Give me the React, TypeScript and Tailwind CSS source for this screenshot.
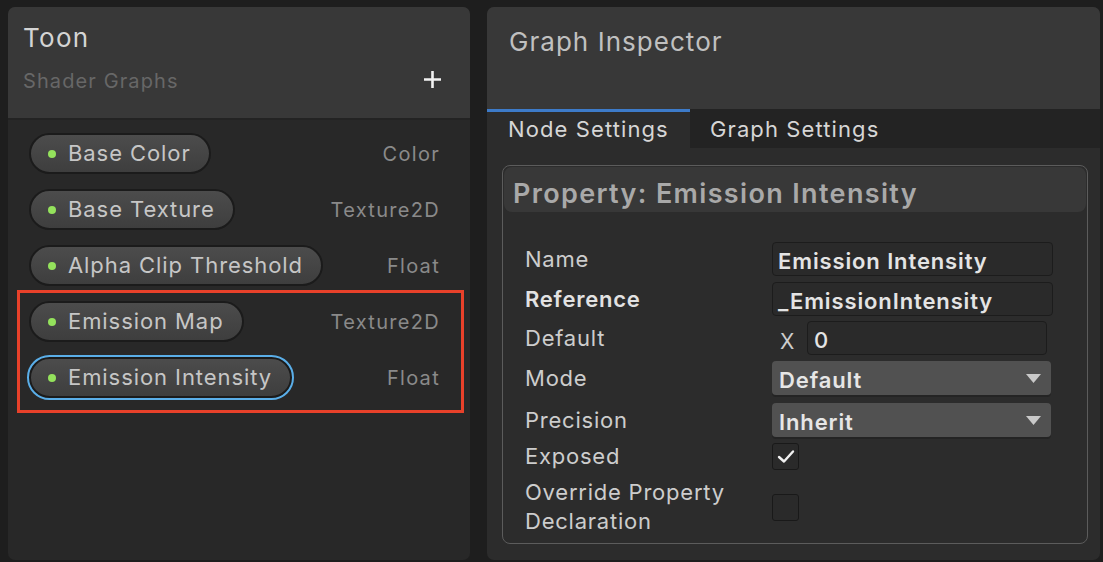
import React from "react";

const font = { fontFamily: "Inter, 'Noto Sans', sans-serif" } as React.CSSProperties;

function Pill({ name, type, selected }: { name: string; type: string; selected?: boolean }) {
  return (
    <div className="flex items-center justify-between h-[41px]">
      <div
        className={
          "flex items-center h-[41px] rounded-full border-2 border-[#1b1b1b] bg-gradient-to-b from-[#4c4c4c] to-[#3e3e3e] pl-[17px] pr-[18px] " +
          (selected ? "outline-2 outline-[#5aaee8]" : "")
        }
      >
        <span className="w-[8px] h-[8px] rounded-full bg-[#94e25c] mr-[12px]" />
        <span className="text-[22px] leading-none tracking-[0.042em] text-[#c6c6c6] pb-[1px]">{name}</span>
      </div>
      <span className="text-[20px] leading-none tracking-[0.065em] text-[#8a8a8a]">{type}</span>
    </div>
  );
}

function Label({ children, bold }: { children: React.ReactNode; bold?: boolean }) {
  return (
    <div
      className={
        "w-[247px] text-[22px] leading-[29px] tracking-[0.035em] " +
        (bold ? "font-semibold text-[#e2e2e2]" : "text-[#cdcdcd]")
      }
    >
      {children}
    </div>
  );
}

function TextField({ value }: { value: string }) {
  return (
    <div className="w-[281px] h-[34px] rounded-[4px] bg-[#2a2a2a] border border-[#1c1c1c] flex items-center px-[5px] pt-[4px] text-[22px] font-semibold tracking-[0.04em] text-[#e4e4e4] leading-none">
      {value}
    </div>
  );
}

function Dropdown({ value }: { value: string }) {
  return (
    <div className="w-[279px] h-[34px] rounded-[4px] bg-[#515151] shadow-[0_2px_0_#242424] flex items-center justify-between pl-[7px] pr-[10px] text-[22px] font-semibold tracking-[0.04em] text-[#e6e6e6] leading-none">
      <span className="pt-[3px]">{value}</span>
      <svg width="15" height="9" viewBox="0 0 15 9">
        <path d="M0 0 L15 0 L7.5 9 Z" fill="#c9c9c9" />
      </svg>
    </div>
  );
}

function Checkbox({ checked }: { checked?: boolean }) {
  return (
    <div className="w-[27px] h-[27px] rounded-[3px] bg-[#2a2a2a] border border-[#191919] flex items-center justify-center">
      {checked && (
        <svg width="18" height="15" viewBox="0 0 18 15">
          <path d="M2 8 L7 12.5 L16 2.5" stroke="#f0f0f0" strokeWidth="2.4" fill="none" strokeLinecap="round" strokeLinejoin="round" />
        </svg>
      )}
    </div>
  );
}

export default function App() {
  return (
    <div style={font} className="w-[1103px] h-[562px] bg-[#1e1e1e] flex gap-[17px] pl-[8px] pt-[7px] overflow-hidden">
      {/* Left panel */}
      <div className="w-[462px] h-[553px] rounded-[7px] overflow-hidden bg-[#282828] flex flex-col">
        <div className="h-[113px] bg-[#383838] border-b-2 border-[#232323] pl-[15px] pr-[28px] pt-[15px]">
          <div className="text-[26px] leading-[32px] tracking-[0.05em] text-[#d4d4d4]">Toon</div>
          <div className="flex items-center justify-between mt-[13px]">
            <span className="text-[20px] leading-[28px] tracking-[0.055em] text-[#676767]">Shader Graphs</span>
            <svg width="19" height="19" viewBox="0 0 19 19" className="-mt-[3px]">
              <path d="M9.5 1 V18 M1 9.5 H18" stroke="#f2f2f2" strokeWidth="2.6" />
            </svg>
          </div>
        </div>
        <div className="flex flex-col gap-[15px] pl-[21px] pr-[30px] pt-[13px]">
          <Pill name="Base Color" type="Color" />
          <Pill name="Base Texture" type="Texture2D" />
          <Pill name="Alpha Clip Threshold" type="Float" />
          <div className="relative flex flex-col gap-[15px]">
            <Pill name="Emission Map" type="Texture2D" />
            <Pill name="Emission Intensity" type="Float" selected />
            <div className="absolute left-[-12px] right-[-24px] top-[-11px] bottom-[-15px] border-[3px] border-[#e8412a] pointer-events-none" />
          </div>
        </div>
      </div>

      {/* Right panel */}
      <div className="w-[613px] h-[553px] rounded-[7px] overflow-hidden bg-[#2c2c2c] flex flex-col">
        <div className="h-[102px] bg-[#383838] pl-[22px] pt-[19px]">
          <div className="text-[26px] leading-[32px] tracking-[0.04em] text-[#c0c0c0]">Graph Inspector</div>
        </div>
        <div className="h-[39px] flex bg-[#232323]">
          <div className="w-[203px] bg-[#2c2c2c] border-t-[3px] border-[#3d7bc9] pl-[21px] flex items-center text-[22px] tracking-[0.05em] text-[#d6d6d6] leading-none pb-[3px]">
            Node Settings
          </div>
          <div className="pl-[20px] flex items-center text-[22px] tracking-[0.05em] text-[#d6d6d6] leading-none">Graph Settings</div>
        </div>
        <div className="pl-[15px] pr-[12px] pt-[17px]">
          <div className="h-[379px] rounded-[8px] border border-[#5c5c5c] p-[1px]">
            <div className="h-[45px] rounded-[8px] bg-[#383838] pl-[9px] pt-[8px] flex items-center text-[27px] font-semibold tracking-[0.05em] text-[#a9a9a9] leading-none">
              Property: Emission Intensity
            </div>
            <div className="pl-[21px] pt-[30px] flex flex-col">
              <div className="flex items-center h-[34px]">
                <Label>Name</Label>
                <TextField value="Emission Intensity" />
              </div>
              <div className="flex items-center h-[34px] mt-[6px]">
                <Label bold>Reference</Label>
                <TextField value="_EmissionIntensity" />
              </div>
              <div className="flex items-center h-[34px] mt-[5px]">
                <Label>Default</Label>
                <span className="w-[35px] pl-[8px] pt-[6px] text-[21px] text-[#cdcdcd] leading-none">X</span>
                <div className="w-[240px] h-[34px] rounded-[4px] bg-[#2a2a2a] border border-[#1c1c1c] flex items-center px-[6px] pt-[3px] text-[22px] font-medium text-[#e4e4e4] leading-none">
                  0
                </div>
              </div>
              <div className="flex items-center h-[34px] mt-[6px]">
                <Label>Mode</Label>
                <Dropdown value="Default" />
              </div>
              <div className="flex items-center h-[34px] mt-[8px]">
                <Label>Precision</Label>
                <Dropdown value="Inherit" />
              </div>
              <div className="flex items-center h-[27px] mt-[6px]">
                <Label>Exposed</Label>
                <Checkbox checked />
              </div>
              <div className="flex items-center mt-[8px]">
                <Label>
                  <div className="leading-[29px]">Override Property</div>
                  <div className="leading-[29px]">Declaration</div>
                </Label>
                <Checkbox />
              </div>
            </div>
          </div>
        </div>
      </div>
    </div>
  );
}
